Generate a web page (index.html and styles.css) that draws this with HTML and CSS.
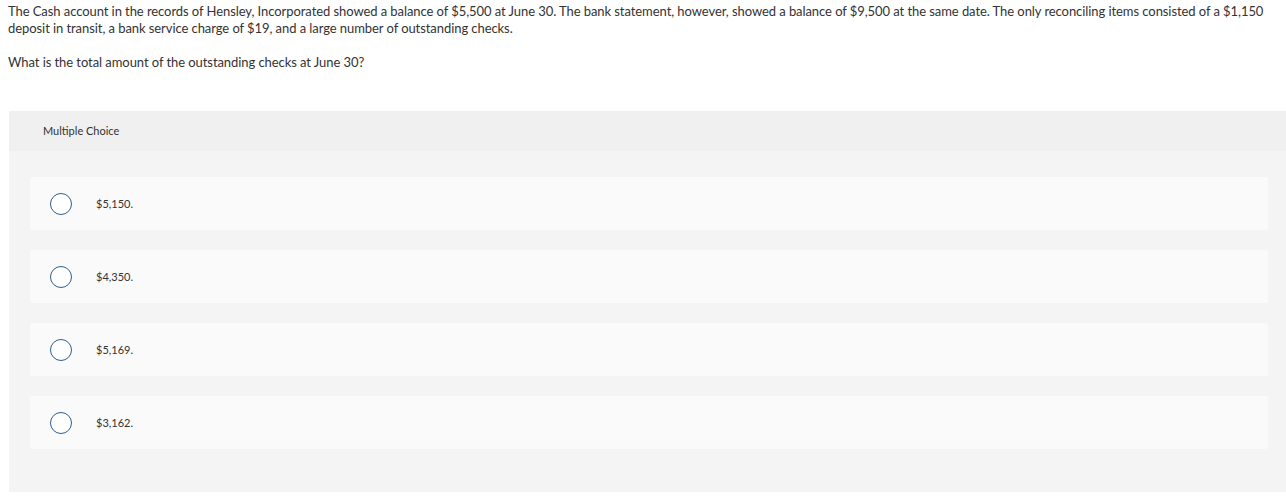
FILE: index.html
```html
<!DOCTYPE html>
<html lang="en">
<head>
<meta charset="utf-8">
<title>Multiple Choice</title>
<link rel="stylesheet" href="styles.css">
</head>
<body>
<div class="prompt">
  <p class="stem">The Cash account in the records of Hensley, Incorporated showed a balance of $5,500 at June 30. The bank statement, however, showed a balance of $9,500 at the same date. The only reconciling items consisted of a $1,150 deposit in transit, a bank service charge of $19, and a large number of outstanding checks.</p>
  <p class="question">What is the total amount of the outstanding checks at June 30?</p>
</div>
<section class="mc">
  <div class="mc-header">Multiple Choice</div>
  <div class="mc-body">
    <label class="option"><span class="radio"></span><span class="answer">$5,150.</span></label>
    <label class="option"><span class="radio"></span><span class="answer">$4,350.</span></label>
    <label class="option"><span class="radio"></span><span class="answer">$5,169.</span></label>
    <label class="option"><span class="radio"></span><span class="answer">$3,162.</span></label>
  </div>
</section>
</body>
</html>
```
FILE: styles.css
```css
html, body {
  overflow: hidden;
}
body {
  margin: 0;
  padding: 0 8px;
  background: #ffffff;
  color: #333333;
  font-family: Lato, "Liberation Sans", sans-serif;
}
.prompt {
  font-size: 13px;
  line-height: 17px;
  letter-spacing: -0.07px;
}
.stem {
  margin: 3px 0 0;
}
.question {
  margin: 17px 0 0;
}
.mc {
  margin: 40px -11px 0 1px;
  background: #f4f4f4;
}
.mc-header {
  box-sizing: border-box;
  height: 40px;
  display: flex;
  align-items: center;
  padding: 0 0 1px 34px;
  background: #f0f0f0;
  font-size: 11px;
  color: #333;
}
.mc-body {
  display: flex;
  flex-direction: column;
  gap: 20px;
  padding: 26px 21px 43px;
}
.option {
  display: flex;
  align-items: center;
  height: 53px;
  background: #fafafa;
  border-radius: 3px;
  padding-left: 20px;
}
.radio {
  width: 20px;
  height: 20px;
  border: 1.5px solid #2e5f8e;
  border-radius: 50%;
  background: #fff;
  flex: none;
}
.answer {
  margin-left: 24px;
  font-size: 11px;
  color: #333;
}
```
